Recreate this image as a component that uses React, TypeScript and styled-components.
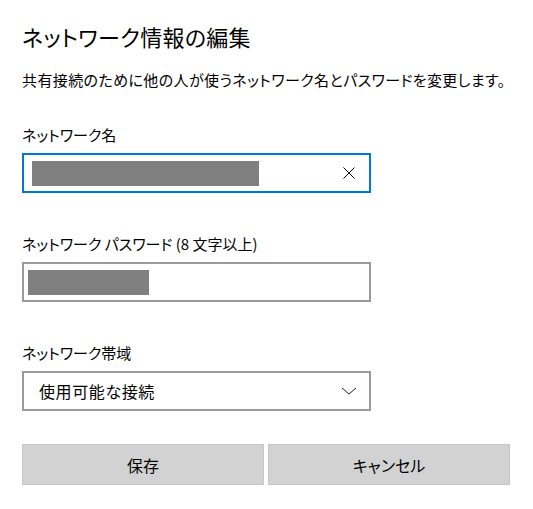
import React, { FC } from "react";
import styled, { createGlobalStyle, css } from "styled-components";

const GlobalStyle = createGlobalStyle`
  html, body {
    margin: 0;
    padding: 0;
    background: #ffffff;
  }
  body {
    font-family: "Noto Sans CJK JP", "Noto Sans", sans-serif;
    font-feature-settings: "palt";
    font-weight: 400;
    color: #000000;
  }
`;

type BoxProps = {
  $focused?: boolean;
};

type RedactProps = {
  $width: number;
  $offset: number;
};

const Page = styled.div`
  width: 533px;
  height: 509px;
  box-sizing: border-box;
  padding: 21px 0 0 22px;
  display: flex;
  flex-direction: column;
`;

const Title = styled.h1`
  margin: 0;
  font-size: 22px;
  line-height: 30px;
  font-weight: 400;
  letter-spacing: 0.3px;
`;

const Description = styled.p`
  margin: 19px 0 0;
  font-size: 15px;
  line-height: 20px;
  letter-spacing: 0.4px;
`;

const Fields = styled.div`
  margin-top: 35px;
  display: flex;
  flex-direction: column;
  gap: 41px;
`;

const Field = styled.div`
  display: flex;
  flex-direction: column;
  gap: 8px;
`;

const Label = styled.label`
  font-size: 15px;
  line-height: 20px;
`;

const Box = styled.div<BoxProps>`
  width: 349px;
  height: 40px;
  box-sizing: border-box;
  border: 2px solid #9b9b9b;
  background: #ffffff;
  display: flex;
  align-items: center;

  ${(p) =>
    p.$focused &&
    css`
      border-color: #0078d7;
    `}
`;

const Redacted = styled.span<RedactProps>`
  display: block;
  width: ${(p) => p.$width}px;
  height: 25px;
  margin-left: ${(p) => p.$offset}px;
  background: #808080;
`;

const IconSlot = styled.span`
  margin-left: auto;
  margin-right: 12px;
  display: flex;
  align-items: center;
  justify-content: center;
  width: 16px;
  height: 16px;
`;

const SelectText = styled.span`
  padding-left: 15px;
  font-size: 16px;
  line-height: 20px;
  letter-spacing: 0.6px;
`;

const Buttons = styled.div`
  margin-top: 33px;
  width: 488px;
  display: grid;
  grid-template-columns: 1fr 1fr;
  gap: 4px;
`;

const Button = styled.button`
  height: 41px;
  box-sizing: border-box;
  border: 1px solid #c6c6c6;
  background: #d2d2d2;
  font-family: inherit;
  font-feature-settings: "palt";
  font-weight: 400;
  font-size: 16px;
  color: #000000;
  padding: 0;
`;

const ClearIcon: FC = () => (
  <svg width="12" height="12" viewBox="0 0 12 12">
    <path d="M0.5 0.5 L11.5 11.5 M11.5 0.5 L0.5 11.5" stroke="#000" strokeWidth="1" fill="none" />
  </svg>
);

const ChevronIcon: FC = () => (
  <svg width="16" height="8" viewBox="0 0 16 8">
    <path d="M1 1 L8 7 L15 1" stroke="#000" strokeWidth="0.9" fill="none" />
  </svg>
);

const App: FC = () => {
  return (
    <React.Fragment>
      <GlobalStyle />
      <Page>
        <Title>ネットワーク情報の編集</Title>
        <Description>共有接続のために他の人が使うネットワーク名とパスワードを変更します。</Description>

        <Fields>
          <Field>
            <Label>ネットワーク名</Label>
            <Box $focused>
              <Redacted $width={227} $offset={8} />
              <IconSlot>
                <ClearIcon />
              </IconSlot>
            </Box>
          </Field>

          <Field>
            <Label>ネットワーク パスワード (8 文字以上)</Label>
            <Box>
              <Redacted $width={121} $offset={4} />
            </Box>
          </Field>

          <Field>
            <Label>ネットワーク帯域</Label>
            <Box>
              <SelectText>使用可能な接続</SelectText>
              <IconSlot>
                <ChevronIcon />
              </IconSlot>
            </Box>
          </Field>
        </Fields>

        <Buttons>
          <Button>保存</Button>
          <Button>キャンセル</Button>
        </Buttons>
      </Page>
    </React.Fragment>
  );
};

export default App;
